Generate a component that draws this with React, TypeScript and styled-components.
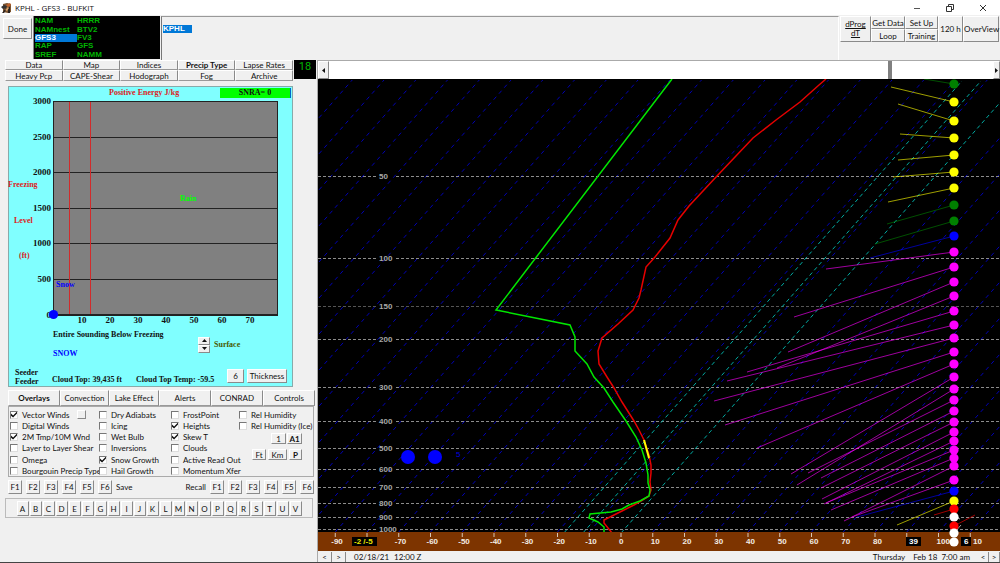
import React, { useState } from 'react';
import styled, { createGlobalStyle } from 'styled-components';

const UI_FONT = '8px/10px Lato, sans-serif';

const GlobalStyle = createGlobalStyle`
  *, *::before, *::after { box-sizing: border-box; }
  body {
    margin: 0;
    background: #f0f0f0;
    color: #111;
    font: ${UI_FONT};
  }
  button, input { font: inherit; color: inherit; margin: 0; padding: 0; }
`;

const SERIF = '"Liberation Serif", serif';
const SANS = '"Liberation Sans", sans-serif';

const Window = styled.div`
  min-height: 100vh;
  display: flex;
  flex-direction: column;
  border-bottom: 1px solid #444;
`;

const TitleBar = styled.header`
  display: flex;
  align-items: center;
  gap: 3px;
  height: 15px;
  padding: 0 2px 0 1px;
  background: #fff;
  color: #111;
`;

const Title = styled.h1`
  flex: 1;
  margin: 0;
  font: 8px/12px "Open Sans", sans-serif;
`;

const WindowButton = styled.button`
  width: 30px;
  height: 15px;
  display: grid;
  place-items: center;
  border: 0;
  background: none;
`;

const Button = styled.button<{ $w?: number; $h?: number; $bold?: boolean }>`
  width: ${p => (p.$w ? `${p.$w}px` : 'auto')};
  height: ${p => (p.$h ? `${p.$h}px` : 'auto')};
  display: grid;
  place-items: center;
  border: 1px solid;
  border-color: #fff #8a8a8a #8a8a8a #fff;
  background: #f0f0f0;
  font-weight: ${p => (p.$bold ? 700 : 400)};
  white-space: nowrap;
`;

const Header = styled.div`
  display: grid;
  grid-template-columns: 32px 127px 1fr 160px;
  gap: 0 1px;
  height: 45px;
  padding-top: 1px;
`;

const DoneCell = styled.div`
  padding: 2px 0 0 3px;
`;

const ModelList = styled.div`
  display: grid;
  grid-template-columns: 42px 42px;
  grid-template-rows: repeat(5, 1fr);
  grid-auto-flow: column;
  height: 43px;
  padding: 1px 0 0 1px;
  border-left: 1px solid #888;
  background: #000;
`;

const Model = styled.button<{ $on: boolean }>`
  display: flex;
  align-items: center;
  border: 0;
  background: ${p => (p.$on ? '#0078d7' : 'none')};
  color: ${p => (p.$on ? '#fff' : '#00b400')};
  font: 700 8px/8px ${SANS};
`;

const StationBox = styled.div`
  padding: 8px 0 0 1px;
  border-left: 1px solid #777;
  border-top: 1px solid #999;
  border-right: 1px solid #fff;
`;

const Station = styled.button`
  display: block;
  width: 29px;
  height: 8px;
  border: 0;
  background: #0078d7;
  color: #fff;
  font: 700 8px/8px ${SANS};
  text-align: left;
`;

const Toolbar = styled.div`
  display: grid;
  grid-template-columns: 31px 34px 33px 25px 36px;
  grid-template-rows: 13px 13px;
`;

const TallButton = styled(Button)`
  grid-row: span 2;
  line-height: 9px;
`;

const Underlined = styled.span`
  text-decoration: underline;
`;

const Body = styled.div`
  display: grid;
  grid-template-columns: 318px 1fr;
`;

const Side = styled.aside`
  border-right: 1px solid #aaa;
`;

const TopTabs = styled.div`
  display: flex;
  gap: 1px;
  padding-left: 5px;
`;

const TabGrid = styled.div`
  display: grid;
  grid-template-columns: repeat(5, 1fr);
  grid-template-rows: 10px 11px;
  width: 288px;
`;

const Tab = styled(Button)`
  border-color: #fff #8a8a8a #999 #fff;
  line-height: 8px;
`;

const HourBox = styled.output`
  width: 22px;
  height: 19px;
  background: #000;
  color: #00b400;
  font: 11px/14px Roboto, sans-serif;
  text-align: center;
`;

const Precip = styled.section`
  width: 285px;
  margin: 5px 0 3px 8px;
  border: 1px solid #8aa;
  background: #80ffff;
  font: 700 8px/10px ${SERIF};
  color: #111;
`;

const PrecipHead = styled.div`
  display: grid;
  grid-template-columns: 1fr 71px;
  align-items: center;
  height: 11px;
  padding-right: 1px;
`;

const PrecipTitle = styled.h2`
  margin: 0;
  padding-left: 100px;
  font: inherit;
  color: #d22;
`;

const Badge = styled.div`
  background: #0f0;
  border-right: 1px solid #06c;
  text-align: center;
`;

const Drawing = styled.svg`
  display: block;
  width: 100%;
  height: auto;
`;

const PrecipResult = styled.div`
  display: grid;
  grid-template-columns: 142px 13px 1fr;
  gap: 3px;
  align-items: center;
  padding: 4px 0 0 44px;
`;

const ResultText = styled.div`
  display: flex;
  flex-direction: column;
  gap: 9px;
  white-space: nowrap;
`;

const SnowText = styled.span`
  color: #00f;
`;

const SurfaceText = styled.span`
  color: #4a5a00;
`;

const Spinner = styled.div`
  display: flex;
  flex-direction: column;
`;

const PrecipFoot = styled.div`
  display: grid;
  grid-template-columns: 37px 84px 91px 17px 40px;
  align-items: center;
  padding: 7px 0 0 6px;
  height: 27px;
  line-height: 9px;
  white-space: nowrap;

  button { font: ${UI_FONT}; }
  button + button { margin-left: 3px; }
`;

const FootLabel = styled.span`
  padding-top: 2px;
`;

const FootNote = styled.span`
  padding-top: 6px;
`;

const OverlayTabs = styled.div`
  display: grid;
  grid-template-columns: 52px 49px 50px 52px 52px 52px;
  height: 16px;
  margin-left: 8px;
`;

const OverlayPanel = styled.section`
  display: grid;
  grid-template-columns: 89px 72px 68px 1fr;
  width: 306px;
  height: 71px;
  margin-left: 8px;
  padding: 2px 0 0 1px;
  border: 1px solid #aaa;
`;

const CheckColumn = styled.div`
  display: flex;
  flex-direction: column;
`;

const CheckRow = styled.label<{ $gap?: boolean }>`
  display: flex;
  align-items: center;
  gap: 4px;
  height: 11px;
  margin-top: ${p => (p.$gap ? 1 : 0)}px;
  white-space: nowrap;
`;

const Tick = styled.input.attrs({ type: 'checkbox' })`
  appearance: none;
  flex: none;
  width: 8px;
  height: 8px;
  border: 1px solid;
  border-color: #777 #ddd #ddd #777;
  background: #fff;

  &:checked::after {
    content: "";
    display: block;
    width: 6px;
    height: 6px;
    background: #111;
    clip-path: polygon(0 35%, 35% 65%, 100% 0, 100% 35%, 35% 100%, 0 70%);
  }
`;

const SwatchButton = styled(Button)`
  margin-left: 3px;
`;

const UnitRow = styled.div<{ $gap: number; $top: number }>`
  display: flex;
  justify-content: flex-end;
  gap: ${p => p.$gap}px;
  padding-right: 11px;
  margin-top: ${p => p.$top}px;
`;

const FunctionRow = styled.div`
  display: flex;
  justify-content: space-between;
  width: 306px;
  margin: 3px 0 4px 8px;
`;

const FunctionGroup = styled.div`
  display: flex;
  align-items: center;
  gap: 4px;
`;

const LetterBox = styled.div`
  display: flex;
  justify-content: center;
  gap: 1px;
  width: 308px;
  height: 20px;
  margin-left: 5px;
  padding-top: 2px;
  border: 1px solid #bbb;
`;

const Main = styled.main`
  display: flex;
  flex-direction: column;
`;

const ScrollRow = styled.div`
  display: grid;
  grid-template-columns: 11px 1fr 7px;
  height: 19px;
  border-top: 1px solid #aaa;
`;

const TimeSlider = styled.input.attrs({ type: 'range' })`
  appearance: none;
  width: 100%;
  height: 18px;
  background: #fff;

  &::-webkit-slider-thumb {
    appearance: none;
    width: 4px;
    height: 18px;
    background: #808080;
  }
`;

const StatusBar = styled.footer`
  display: flex;
  align-items: center;
  height: 11px;
  gap: 0 8px;
`;

const StatusTime = styled.span`
  flex: 1;
`;

const StatusDate = styled.span`
  width: 32px;
`;

const Steps = styled.div`
  display: flex;

  button { border-width: 0 1px 0 0; }
`;

const MODELS = ['NAM', 'NAMnest', 'GFS3', 'RAP', 'SREF', 'HRRR', 'BTV2', 'FV3', 'GFS', 'NAMM'];
const TABS = ['Data', 'Map', 'Indices', 'Precip Type', 'Lapse Rates', 'Heavy Pcp', 'CAPE-Shear', 'Hodograph', 'Fog', 'Archive'];
const OVERLAY_TABS = ['Overlays', 'Convection', 'Lake Effect', 'Alerts', 'CONRAD', 'Controls'];
const CHECKS = [
  ['Vector Winds', 'Digital Winds', '2M Tmp/10M Wnd', 'Layer to Layer Shear', 'Omega', 'Bourgouin Precip Type'],
  ['Dry Adiabats', 'Icing', 'Wet Bulb', 'Inversions', 'Snow Growth', 'Hail Growth'],
  ['FrostPoint', 'Heights', 'Skew T', 'Clouds', 'Active Read Out', 'Momentum Xfer'],
  ['Rel Humidity', 'Rel Humidity (Ice)'],
];
const CHECKED = ['Vector Winds', '2M Tmp/10M Wnd', 'Snow Growth', 'Heights', 'Skew T'];
const F_KEYS = ['F1', 'F2', 'F3', 'F4', 'F5', 'F6'];
const LETTERS = 'ABCDEFGHIJKLMNOPQRSTUV'.split('');

const PRESSURES = [
  [50, 97], [100, 179], [150, 227], [200, 260], [300, 308], [400, 342],
  [500, 369], [600, 390], [700, 408], [800, 424], [900, 438], [1000, 450],
];

/* height of the station dot, end of its wind line (x, y), colour */
type Wind = [number, number, number, string];
const M = '#ff00ff';
const Y = '#ffff00';
const G = '#008000';
const WINDS: Wind[] = [
  [5, 606, 0, G], [23, 573, 8, Y], [42, 580, 25, Y], [59, 582, 55, Y], [76, 580, 81, Y],
  [93, 575, 98, Y], [109, 570, 123, Y], [126, 569, 145, G], [142, 557, 165, G],
  [157, 552, 179, '#0000ff'], [173, 508, 190, M], [188, 476, 238, M], [203, 470, 273, M],
  [217, 459, 289, M], [232, 429, 293, M], [246, 409, 302, M], [259, 396, 322, M],
  [273, 407, 346, M], [285, 439, 369, M], [298, 473, 395, M], [310, 479, 406, M],
  [321, 490, 394, M], [332, 503, 399, M], [343, 503, 409, M], [353, 504, 420, M],
  [362, 506, 425, M], [371, 508, 424, M], [379, 513, 431, M], [387, 526, 442, M],
  [401, 534, 438, M], [412, 539, 438, '#0000ff'], [422, 579, 446, Y], [430, 616, 436, '#ff0000'],
  [438, 642, 440, '#ffffff'], [447, 657, 436, '#ff0000'], [454, 643, 446, '#ffffff'], [463, 640, 456, '#ffffff'],
];

const DEWPOINT =
  '354,0 178,231 252,246 257,258 257,272 269,285 276,298 286,309 295,323 308,342 318,358 324,371 328,384 330,396 330,404 332,411 331,417 322,422 311,426 304,430 293,433 272,435 271,439 280,443 286,448 286,454';
const TEMPERATURE =
  '508,0 501,6 482,23 458,41 435,59 399,97 371,127 360,141 352,159 337,178 328,188 323,211 321,219 315,231 300,245 284,259 280,272 281,285 289,298 296,309 304,323 316,342 321,351 326,361 331,376 333,386 333,394 332,403 333,411 331,417 323,422 316,426 304,432 286,441 286,444 294,454';

/* ticks whose number gives way to a highlighted read-out */
const UNLABELLED = [-80, 90, 110];

const tickX = (t: number) => 303 + t * 3.175;

function SoundingChart() {
  const blue = [];
  for (let t = -210; t <= 120; t += 10) if (t !== 0) blue.push(t);
  const ticks = [];
  for (let t = -90; t <= 110; t += 10) ticks.push(t);
  return (
    <Drawing viewBox="0 0 682 472" role="img" aria-label="Skew T sounding">
      <rect width="682" height="472" fill="#000" />
      {blue.map(t => (
        <line key={t} x1={tickX(t)} y1="453" x2={tickX(t) + 398} y2="1" stroke="#0000b4" strokeDasharray="4 4" />
      ))}
      {PRESSURES.map(([p, y]) => (
        <g key={p}>
          <line x1="0" x2="58" y1={y + 0.5} y2={y + 0.5} stroke={p === 150 ? '#555' : '#8c8c8c'} strokeDasharray="3 2" />
          <line x1={p === 1000 ? 82 : 78} x2="682" y1={y + 0.5} y2={y + 0.5} stroke={p === 150 ? '#555' : '#8c8c8c'} strokeDasharray="3 2" />
          <text x="61" y={y + 3} fontFamily="Liberation Sans" fontSize="8" fontWeight="700" fill="#a8a8a8">{p}</text>
        </g>
      ))}
      {[-18, -12, 0].map(t => (
        <line key={t} x1={tickX(t)} y1="454" x2={tickX(t) + 398} y2="2" stroke="#00aaa2" strokeDasharray="4 3" />
      ))}
      <circle cx="90" cy="378" r="7" fill="#00f" />
      <circle cx="117" cy="378" r="7" fill="#00f" />
      <text x="138" y="378" fontFamily="Liberation Sans" fontSize="8" fill="#0000e0">5</text>
      {WINDS.map(([y, ex, ey, c]) => (
        <line key={y} x1="636" y1={y} x2={ex} y2={ey} stroke={c} strokeOpacity="0.62" />
      ))}
      <polyline points={TEMPERATURE} fill="none" stroke="#e60000" strokeWidth="1.500" />
      <polyline points={DEWPOINT} fill="none" stroke="#00e600" strokeWidth="1.500" />
      <line x1="326" y1="361" x2="331" y2="379" stroke="#ff0" strokeWidth="2" />
      <rect y="453" width="682" height="19" fill="#7d3400" />
      {ticks.map(t => (
        <g key={t}>
          <line x1={tickX(t)} x2={tickX(t)} y1="454" y2="458" stroke="#d8c8b8" />
          {!UNLABELLED.includes(t) && (
            <text x={tickX(t) - (t < 0 ? 4 : 2)} y="465" fontFamily="Liberation Sans" fontSize="8" fontWeight="700" fill="#f4ece4">{t}</text>
          )}
        </g>
      ))}
      <g fontFamily="Liberation Sans" fontSize="8" fontWeight="700">
        <rect x="34" y="458" width="25" height="9" fill="#000" />
        <text x="36" y="465" fill="#e6e600">-2 /-5</text>
        <rect x="588" y="458" width="15" height="9" fill="#000" />
        <text x="591" y="465" fill="#fff">39</text>
        <rect x="643" y="458" width="10" height="9" fill="#000" />
        <text x="646" y="465" fill="#fff">6</text>
        <text x="655" y="465" fill="#f4ece4">10</text>
      </g>
      {WINDS.map(([y, , , c]) => (
        <circle key={y} cx="636" cy={y} r="4.600" fill={c} />
      ))}
    </Drawing>
  );
}

function PrecipChart() {
  const rows = [3000, 2500, 2000, 1500, 1000, 500, 0];
  return (
    <Drawing viewBox="0 0 283 228" role="img" aria-label="Freezing level against positive energy">
      <rect x="44.500" y="3.500" width="224" height="213" fill="#808080" stroke="#222" />
      {rows.map((v, i) => (
        <g key={v}>
          <line x1="44" x2="269" y1={3.5 + Math.round(i * 35.6)} y2={3.5 + Math.round(i * 35.6)} stroke="#222" />
          <text x="42" y={6 + Math.round(i * 35.6)} textAnchor="end">{v}</text>
        </g>
      ))}
      <path d="M60 4h1v212h-1zM81 4h1v212h-1z" fill="#d22b2b" />
      {[10, 20, 30, 40, 50, 60, 70].map((v, i) => (
        <text key={v} x={73 + i * 28} y="225" textAnchor="middle">{v}</text>
      ))}
      <circle cx="44.500" cy="216.500" r="4.600" fill="#00f" />
      <g fontSize="8">
        <text x="-1" y="89" fill="#d22">Freezing</text>
        <text x="5" y="125" fill="#d22">Level</text>
        <text x="10" y="160" fill="#d22">(ft)</text>
        <text x="171" y="103" fill="#00ff00">Rain</text>
        <text x="47" y="189" fill="#00f">Snow</text>
      </g>
    </Drawing>
  );
}

const PrecipChartType = styled.div`
  svg { font: 700 9px ${SERIF}; fill: #111; overflow: visible; }
`;

function Arrow({ d }: { d: string }) {
  return (
    <svg width="5" height="5" viewBox="0 0 5 5" aria-hidden="true">
      <path d={d} fill="#111" />
    </svg>
  );
}

function AppIcon() {
  return (
    <svg width="11" height="12" viewBox="0 0 11 12" aria-hidden="true">
      <path d="M2 2l4-1 4 1v8l-3 1-5-1z" fill="#7a5330" />
      <path d="M0 5l3-2 3 1-1 2-3 1z" fill="#333" />
      <path d="M5 3l4-2 1 2-3 2z" fill="#c0612a" />
      <path d="M1 11l4-5 1 1-3 4zM7 5h2v6H7z" fill="#2b2320" />
      <path d="M4 8l3-3 1 1-2 3z" fill="#d9a36a" />
    </svg>
  );
}

export default function App() {
  const [model, setModel] = useState('GFS3');
  const [time, setTime] = useState(847);
  return (
    <Window>
      <GlobalStyle />
      <TitleBar>
        <AppIcon />
        <Title>KPHL - GFS3 - BUFKIT</Title>
        <WindowButton aria-label="Minimize">
          <svg width="8" height="8"><path d="M1 4.500h6" stroke="#555" /></svg>
        </WindowButton>
        <WindowButton aria-label="Restore">
          <svg width="8" height="8"><path d="M.5 2.500h5v5h-5zM2.500 2.500v-2h5v5h-2" fill="none" stroke="#333" /></svg>
        </WindowButton>
        <WindowButton aria-label="Close">
          <svg width="8" height="8"><path d="M1 1l6 6M7 1l-6 6" stroke="#333" /></svg>
        </WindowButton>
      </TitleBar>

      <Header>
        <DoneCell><Button $w={29} $h={21}>Done</Button></DoneCell>
        <ModelList>
          {MODELS.map(m => (
            <Model key={m} $on={m === model} onClick={() => setModel(m)}>{m}</Model>
          ))}
        </ModelList>
        <StationBox><Station>KPHL</Station></StationBox>
        <Toolbar>
          <TallButton><span><Underlined>dProg</Underlined><br /><Underlined>dT</Underlined></span></TallButton>
          <Button>Get Data</Button>
          <Button>Set Up</Button>
          <TallButton>120 h</TallButton>
          <TallButton>OverView</TallButton>
          <Button>Loop</Button>
          <Button>Training</Button>
        </Toolbar>
      </Header>

      <Body>
        <Side>
          <TopTabs>
            <TabGrid>
              {TABS.map(t => <Tab key={t} $bold={t === 'Precip Type'}>{t}</Tab>)}
            </TabGrid>
            <HourBox>18</HourBox>
          </TopTabs>

          <Precip>
            <PrecipHead>
              <PrecipTitle>Positive Energy J/kg</PrecipTitle>
              <Badge>SNRA= 0</Badge>
            </PrecipHead>
            <PrecipChartType><PrecipChart /></PrecipChartType>
            <PrecipResult>
              <ResultText>
                <span>Entire Sounding Below Freezing</span>
                <SnowText>SNOW</SnowText>
              </ResultText>
              <Spinner>
                <Button $w={12} $h={8} aria-label="Level up"><Arrow d="M0 4h5L2.500 1z" /></Button>
                <Button $w={12} $h={8} aria-label="Level down"><Arrow d="M0 1h5L2.500 4z" /></Button>
              </Spinner>
              <SurfaceText>Surface</SurfaceText>
            </PrecipResult>
            <PrecipFoot>
              <FootLabel>Seeder<br />Feeder</FootLabel>
              <FootNote>Cloud Top: 39,435 ft</FootNote>
              <FootNote>Cloud Top Temp: -59.5</FootNote>
              <Button $w={17} $h={14}>6</Button>
              <Button $w={40} $h={14}>Thickness</Button>
            </PrecipFoot>
          </Precip>

          <OverlayTabs>
            {OVERLAY_TABS.map(t => <Tab key={t} $bold={t === 'Overlays'}>{t}</Tab>)}
          </OverlayTabs>
          <OverlayPanel>
            {CHECKS.map((col, c) => (
              <CheckColumn key={c}>
                {col.map((name, i) => (
                  <CheckRow key={name} $gap={i === 4}>
                    <Tick defaultChecked={CHECKED.includes(name)} />
                    {name}
                    {name === 'Vector Winds' && <SwatchButton $w={9} $h={9} aria-label="Wind colour" />}
                  </CheckRow>
                ))}
                {c === 3 && (
                  <>
                    <UnitRow $gap={1} $top={2}>
                      <Button $w={15} $h={11}>1</Button>
                      <Button $w={15} $h={11} $bold>A1</Button>
                    </UnitRow>
                    <UnitRow $gap={2} $top={5}>
                      <Button $w={14} $h={11}>Ft</Button>
                      <Button $w={19} $h={11}>Km</Button>
                      <Button $w={13} $h={11} $bold>P</Button>
                    </UnitRow>
                  </>
                )}
              </CheckColumn>
            ))}
          </OverlayPanel>

          <FunctionRow>
            <FunctionGroup>
              {F_KEYS.map(f => <Button key={f} $w={14} $h={14}>{f}</Button>)}
              <span>Save</span>
            </FunctionGroup>
            <FunctionGroup>
              <span>Recall</span>
              {F_KEYS.map(f => <Button key={f} $w={14} $h={14}>{f}</Button>)}
            </FunctionGroup>
          </FunctionRow>
          <LetterBox>
            {LETTERS.map(l => <Button key={l} $w={12} $h={15}>{l}</Button>)}
          </LetterBox>
        </Side>

        <Main>
          <ScrollRow>
            <Button aria-label="Earlier"><Arrow d="M4 0v5L1 2.500z" /></Button>
            <TimeSlider aria-label="Forecast time" min={0} max={1000} value={time} onChange={e => setTime(Number(e.target.value))} />
            <Button aria-label="Later"><Arrow d="M1 0v5L4 2.500z" /></Button>
          </ScrollRow>
          <SoundingChart />
          <StatusBar>
            <Steps>
              <Button $w={14} $h={10} aria-label="Previous hour">&lt;</Button>
              <Button $w={14} $h={10} aria-label="Next hour">&gt;</Button>
            </Steps>
            <StatusDate>02/18/21</StatusDate>
            <StatusTime>12:00 Z</StatusTime>
            <span>Thursday</span>
            <span>Feb 18&nbsp; 7:00 am</span>
            <Steps>
              <Button $w={11} $h={10} aria-label="Previous time">&lt;</Button>
              <Button $w={11} $h={10} aria-label="Next time">&gt;</Button>
            </Steps>
          </StatusBar>
        </Main>
      </Body>
    </Window>
  );
}
